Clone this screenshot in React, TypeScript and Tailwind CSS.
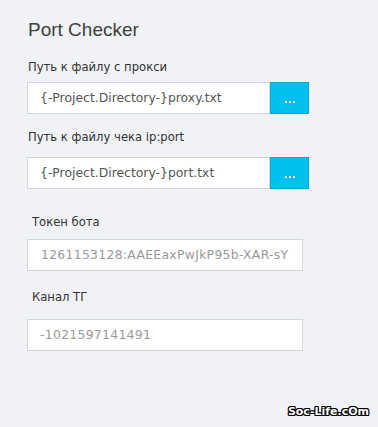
import React from "react";

function Dots() {
  return (
    <button className="w-[39px] h-[32px] bg-[#00c0ef] border border-[#00acd6] flex items-end justify-center gap-[2px] pb-[10px]">
      <span className="w-[2px] h-[2px] bg-white" />
      <span className="w-[2px] h-[2px] bg-white" />
      <span className="w-[2px] h-[2px] bg-white" />
    </button>
  );
}

export default function App() {
  return (
    <div className="relative w-[378px] h-[427px] bg-[#f1f2f6] pl-[27px] pt-[18px] overflow-hidden font-['DejaVu_Sans',sans-serif]">
      <div className="font-['Liberation_Sans',sans-serif] text-[19px] leading-[24px] text-[#404040] pl-[1px]">Port Checker</div>

      <div className="mt-[17px] text-[11.6px] leading-[16px] text-[#333] pl-[1px]">Путь к файлу с прокси</div>
      <div className="mt-[7px] flex">
        <div className="w-[243px] h-[32px] bg-white border border-[#d2d6de] flex items-center pl-[12px] text-[12.4px] text-[#555]">
          {"{-Project.Directory-}proxy.txt"}
        </div>
        <Dots />
      </div>

      <div className="mt-[15px] text-[11.6px] leading-[16px] text-[#333] pl-[1px]">Путь к файлу чека ip:port</div>
      <div className="mt-[12px] flex">
        <div className="w-[243px] h-[32px] bg-white border border-[#d2d6de] flex items-center pl-[12px] text-[12.4px] text-[#555]">
          {"{-Project.Directory-}port.txt"}
        </div>
        <Dots />
      </div>

      <div className="mt-[25px] text-[11.6px] leading-[16px] text-[#333] pl-[5px]">Токен бота</div>
      <div className="mt-[9px] w-[276px] h-[32px] bg-white border border-[#d2d6de] flex items-center pl-[13px] text-[12.4px] tracking-[0.3px] text-[#999] overflow-hidden whitespace-nowrap">
        1261153128:AAEEaxPwJkP95b-XAR-sY
      </div>

      <div className="mt-[18px] text-[11.6px] leading-[16px] text-[#333] pl-[5px]">Канал ТГ</div>
      <div className="mt-[14px] w-[276px] h-[32px] bg-white border border-[#d2d6de] flex items-center pl-[12px] text-[12.4px] tracking-[0.3px] text-[#999]">
        -1021597141491
      </div>

      <div className="absolute right-[9px] bottom-[8px] font-['DejaVu_Sans',sans-serif] font-bold text-[11px] leading-[14px] text-white [text-shadow:1px_0_0_#000,-1px_0_0_#000,0_1px_0_#000,0_-1px_0_#000,1px_1px_0_#000,-1px_-1px_0_#000,1px_-1px_0_#000,-1px_1px_0_#000]">
        Soc-Life.cOm
      </div>
    </div>
  );
}
